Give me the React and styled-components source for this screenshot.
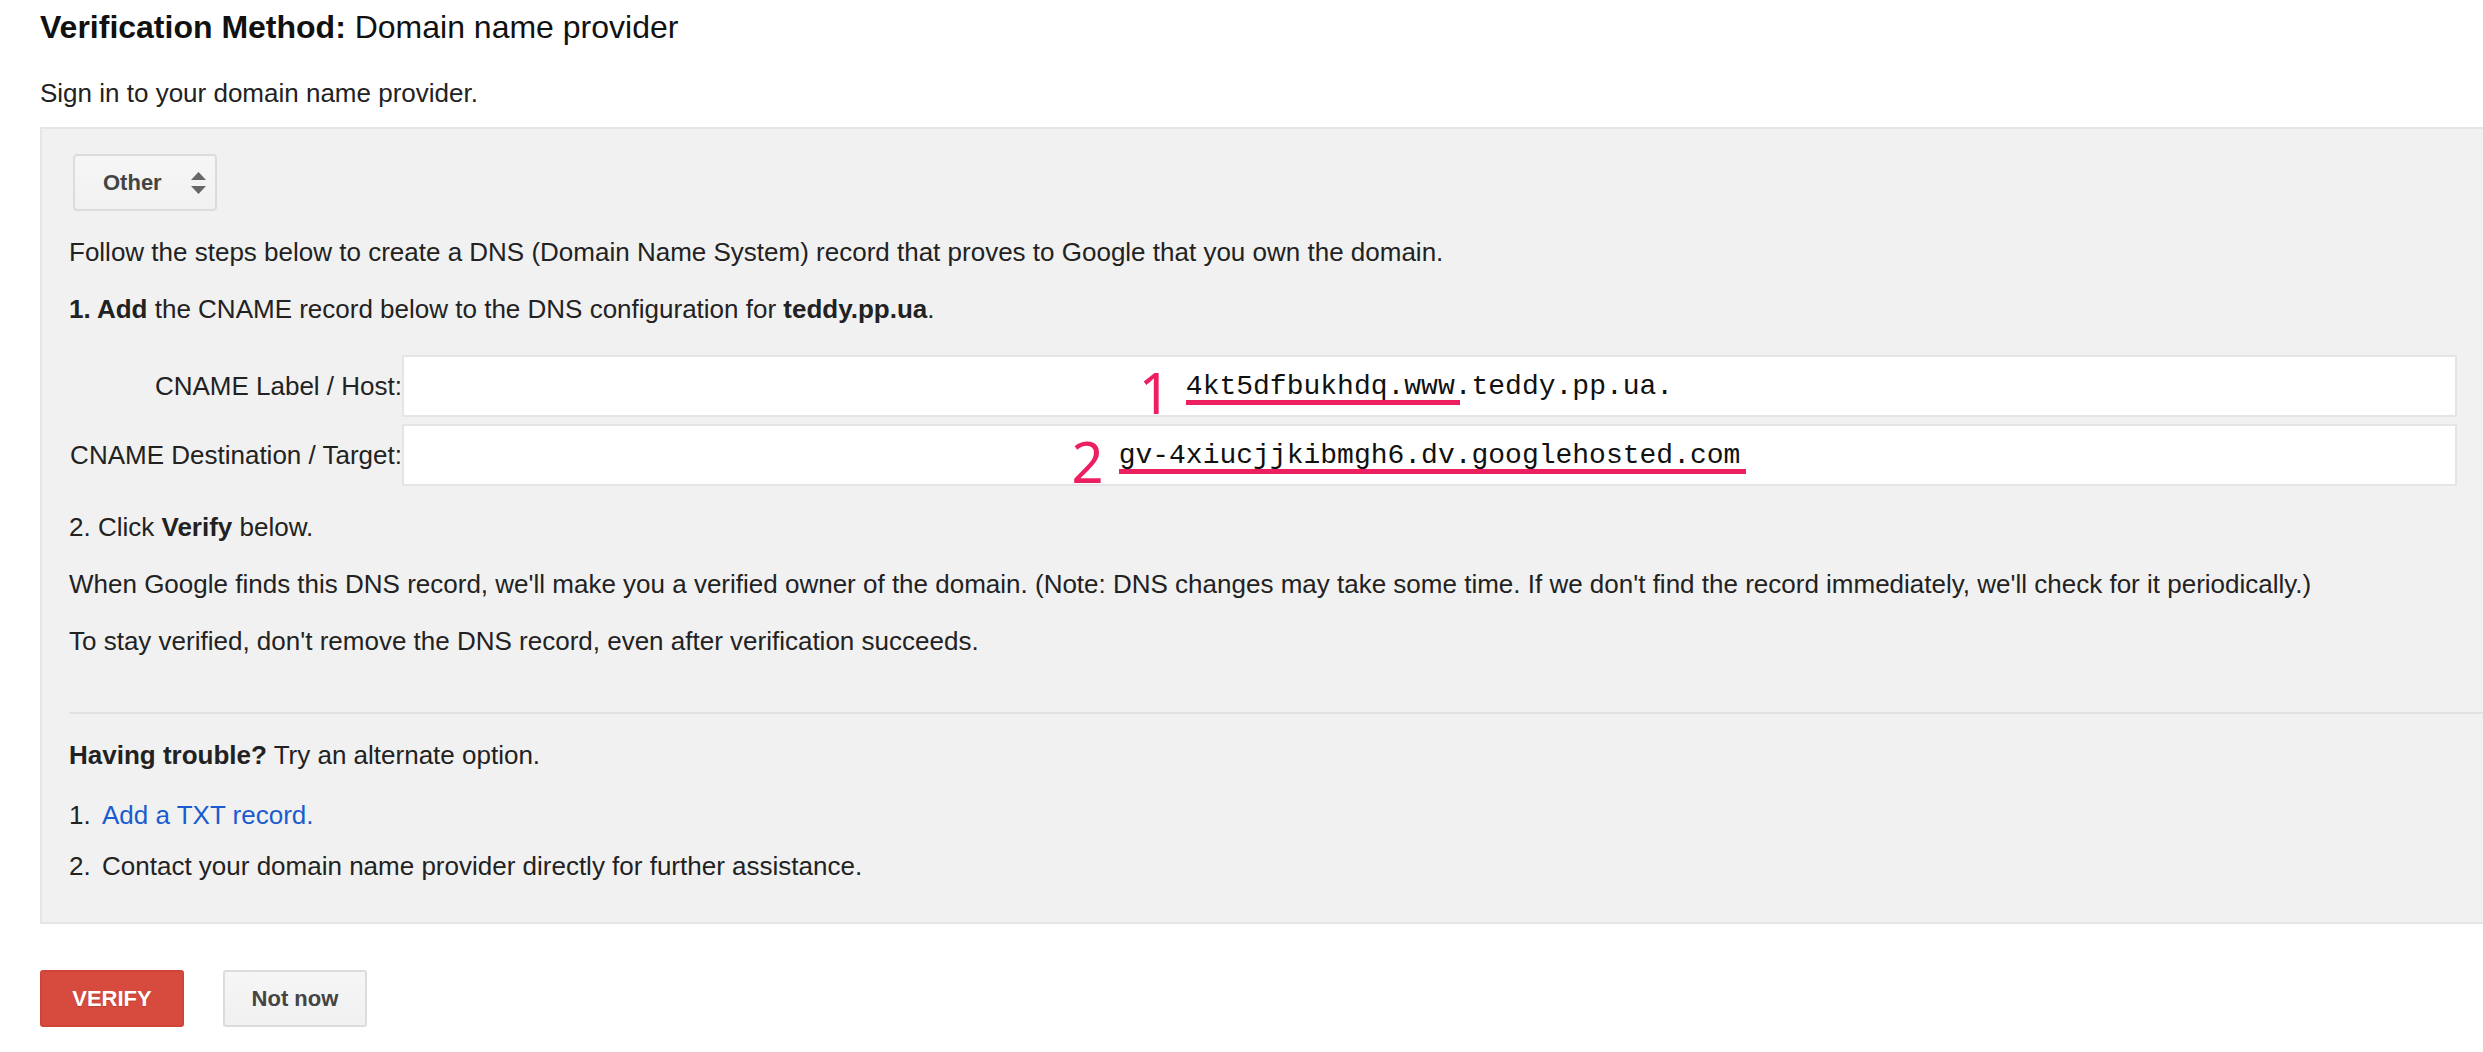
import React from "react";
import styled, { createGlobalStyle } from "styled-components";

const GlobalStyle = createGlobalStyle`
    html, body {
        margin: 0;
        padding: 0;
        background: #ffffff;
    }
    body {
        font-family: "Liberation Sans", Arial, sans-serif;
        color: #222222;
    }
`;

const App = () => {
    return (
        <Page>
            <GlobalStyle />
            <Title>
                <b>Verification Method:</b> Domain name provider
            </Title>
            <Intro>Sign in to your domain name provider.</Intro>

            <Panel>
                <Select>
                    Other
                    <Arrows viewBox="0 0 15 22">
                        <path d="M7.5 0 L15 8 L0 8 Z" fill="#666" />
                        <path d="M7.5 22 L15 14 L0 14 Z" fill="#666" />
                    </Arrows>
                </Select>

                <Text $top={23}>
                    Follow the steps below to create a DNS (Domain Name System) record that proves to Google that you own the domain.
                </Text>
                <Text $top={21}>
                    <b>1. Add</b> the CNAME record below to the DNS configuration for <b>teddy.pp.ua</b>.
                </Text>

                <Records>
                    <Label>CNAME Label / Host:</Label>
                    <Field>
                        <Value>
                            <Mark>1</Mark>
                            4kt5dfbukhdq.www.teddy.pp.ua.
                            <Underline style={{ width: "274px" }} />
                        </Value>
                    </Field>
                    <Label>CNAME Destination / Target:</Label>
                    <Field>
                        <Value>
                            <Mark>2</Mark>
                            gv-4xiucjjkibmgh6.dv.googlehosted.com
                            <Underline style={{ width: "627px" }} />
                        </Value>
                    </Field>
                </Records>

                <Text $top={23}>
                    2. Click <b>Verify</b> below.
                </Text>
                <Text $top={21}>
                    When Google finds this DNS record, we'll make you a verified owner of the domain. (Note: DNS changes may take some time. If we don't find the record immediately, we'll check for it periodically.)
                </Text>
                <Text $top={21}>
                    To stay verified, don't remove the DNS record, even after verification succeeds.
                </Text>

                <Divider />

                <Text $top={23}>
                    <b>Having trouble?</b> Try an alternate option.
                </Text>
                <Options>
                    <Option>
                        <Num>1.</Num>
                        <Link href="#">Add a TXT record.</Link>
                    </Option>
                    <Option>
                        <Num>2.</Num>
                        Contact your domain name provider directly for further assistance.
                    </Option>
                </Options>
            </Panel>

            <Actions>
                <Button $primary>VERIFY</Button>
                <Button>Not now</Button>
            </Actions>
        </Page>
    );
};

const Page = styled.div`
    padding: 9px 0 40px 40px;
`;

const Title = styled.h1`
    margin: 0;
    font-size: 32px;
    line-height: 36px;
    font-weight: normal;
    color: #111;

    b {
        font-weight: bold;
    }
`;

const Intro = styled.p`
    margin: 30px 0 0;
    font-size: 26px;
    line-height: 36px;
`;

const Panel = styled.div`
    margin-top: 16px;
    background: #f1f1f1;
    border: 2px solid #e5e5e5;
    border-right: none;
    padding: 25px 0 38px 27px;
`;

const Select = styled.div`
    display: inline-flex;
    align-items: center;
    gap: 29px;
    box-sizing: border-box;
    width: 144px;
    height: 57px;
    margin-left: 4px;
    padding: 0 0 0 28px;
    background: linear-gradient(#f6f6f6, #f1f1f1);
    border: 2px solid #dcdcdc;
    border-radius: 4px;
    font-size: 22px;
    font-weight: bold;
    color: #444;
`;

const Arrows = styled.svg`
    width: 15px;
    height: 22px;
`;

const Text = styled.p`
    margin: ${(p) => p.$top}px 0 0;
    font-size: 26px;
    line-height: 36px;
    color: #222;
`;

const Records = styled.div`
    display: grid;
    grid-template-columns: 333px 1fr;
    row-gap: 7px;
    margin: 28px 26px 0 0;
`;

const Label = styled.div`
    display: flex;
    align-items: center;
    justify-content: flex-end;
    font-size: 26px;
    color: #222;
    white-space: nowrap;
`;

const Field = styled.div`
    display: flex;
    align-items: center;
    justify-content: center;
    box-sizing: border-box;
    height: 62px;
    background: #fff;
    border: 2px solid #e5e5e5;
`;

const Value = styled.span`
    position: relative;
    font-family: "Liberation Mono", "Courier New", monospace;
    font-size: 28px;
    color: #111;
`;

const Mark = styled.span`
    position: absolute;
    right: 100%;
    margin-right: 15px;
    bottom: -10px;
    font-family: "Noto Sans", "Open Sans", sans-serif;
    font-weight: 400;
    font-size: 56px;
    line-height: 40px;
    color: #ec1f61;
`;

const Underline = styled.span`
    position: absolute;
    left: 0;
    bottom: -3px;
    height: 5px;
    background: #ec1f61;
`;

const Divider = styled.hr`
    margin: 53px 0 0;
    border: none;
    border-top: 2px solid #e2e2e2;
`;

const Options = styled.ol`
    list-style: none;
    margin: 24px 0 0;
    padding: 0;
    display: flex;
    flex-direction: column;
    gap: 15px;
`;

const Option = styled.li`
    display: flex;
    font-size: 26px;
    line-height: 36px;
    color: #222;
`;

const Num = styled.span`
    width: 33px;
`;

const Link = styled.a`
    color: #1a5ccf;
    text-decoration: none;
`;

const Actions = styled.div`
    display: flex;
    gap: 39px;
    margin-top: 46px;
`;

const Button = styled.button`
    box-sizing: border-box;
    width: 144px;
    height: 57px;
    border-radius: 3px;
    font-family: "Liberation Sans", Arial, sans-serif;
    font-size: 22px;
    font-weight: bold;
    cursor: pointer;
    border: 2px solid ${(p) => (p.$primary ? "#d04537" : "#dcdcdc")};
    background: ${(p) => (p.$primary ? "#d64b3d" : "linear-gradient(#f6f6f6, #f0f0f0)")};
    color: ${(p) => (p.$primary ? "#fff" : "#444")};
    text-shadow: ${(p) => (p.$primary ? "0 1px 1px rgba(0,0,0,0.15)" : "none")};
`;

export default App;
